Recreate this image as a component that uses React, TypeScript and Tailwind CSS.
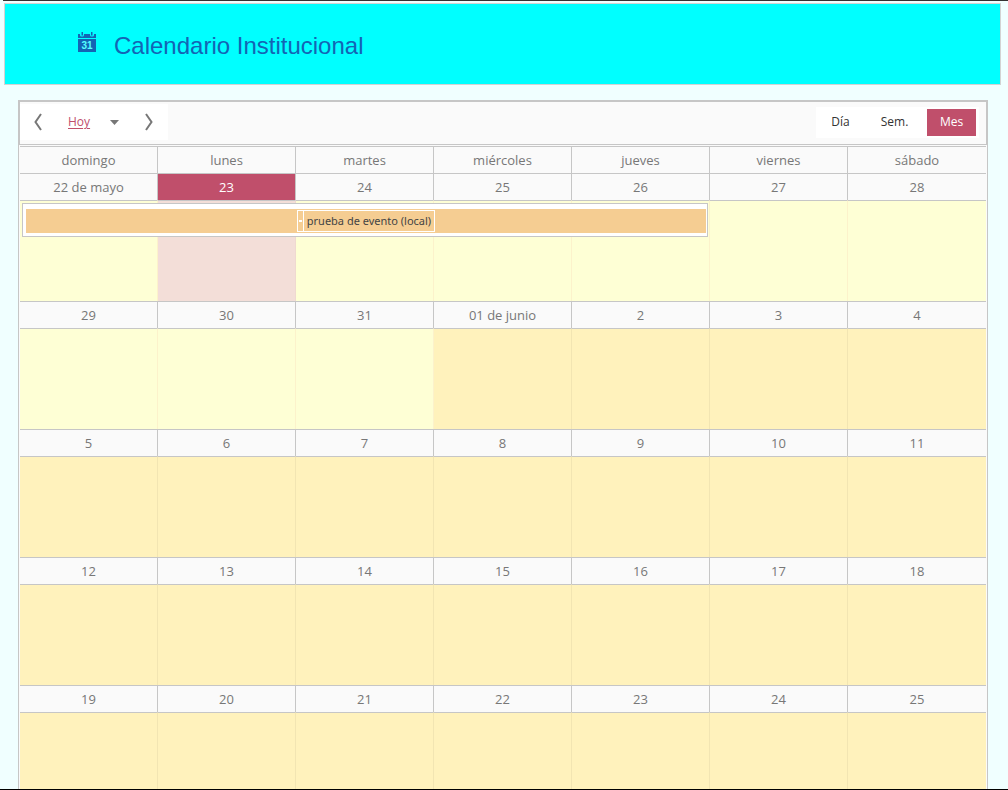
const dayNames = ["domingo", "lunes", "martes", "miércoles", "jueves", "viernes", "sábado"];

type Day = { label: string; tone: "current" | "next" | "today" };

const current = (label: string): Day => ({ label, tone: "current" });
const next = (label: string): Day => ({ label, tone: "next" });

const weeks: Day[][] = [
  [current("22 de mayo"), { label: "23", tone: "today" }, ...["24", "25", "26", "27", "28"].map(current)],
  [...["29", "30", "31"].map(current), ...["01 de junio", "2", "3", "4"].map(next)],
  ["5", "6", "7", "8", "9", "10", "11"].map(next),
  ["12", "13", "14", "15", "16", "17", "18"].map(next),
  ["19", "20", "21", "22", "23", "24", "25"].map(next),
];

const cellTone = {
  current: "bg-[#feffd5] border-r-[#fcf2cb]",
  next: "bg-[#fff2bc] border-r-[#f2e5b2]",
  today: "bg-[#f3ded8] border-r-[#efd9d0]",
};

function CalendarIcon() {
  return (
    <svg viewBox="0 0 18 20" className="h-5 w-[18px]" aria-hidden="true">
      <path
        fill="#1464b4"
        d="M0 2h2v1a1.500 1.500 0 0 0 1.500 1.500h1a1.500 1.500 0 0 0 1.500-1.500V2h6v1a1.500 1.500 0 0 0 1.500 1.500h1a1.500 1.500 0 0 0 1.500-1.500V2h2v4H0zM0 7h18v13H0zM3.500 0h1.500v3.500h-1.500zM13 0h1.500v3.500h-1.500z"
      />
      <text x="9" y="17" textAnchor="middle" fontSize="10" fontWeight="700" fill="#5ff" fontFamily="Liberation Sans, sans-serif">
        31
      </text>
    </svg>
  );
}

function Chevron({ flip = false }: { flip?: boolean }) {
  return (
    <svg viewBox="0 0 10 18" className={flip ? "h-[18px] w-2.5 rotate-180" : "h-[18px] w-2.5"} aria-hidden="true">
      <path d="M8 1 2.500 9 8 17" fill="none" stroke="#777" strokeWidth="2" />
    </svg>
  );
}

function EventBar() {
  return (
    <div className="absolute top-0.5 left-0.5 z-10 h-[34px] w-[calc(500%+1px)] border border-[#c6c6c6] bg-white pt-[5px] pr-px pb-[3px] pl-[3px]">
      <div className="flex h-6 items-center justify-center bg-[#f5cd92]">
        <div className="flex h-[22px] items-center border border-white font-['Noto_Sans',sans-serif] text-[11px] leading-5 text-[#444]">
          <span className="flex h-5 w-1.5 items-center justify-center border-r border-white">
            <span className="h-0.5 w-[3px] bg-white" />
          </span>
          <a href="#evento" className="px-[3px] whitespace-nowrap">
            prueba de evento (local)
          </a>
        </div>
      </div>
    </div>
  );
}

function Toolbar() {
  return (
    <div className="flex h-[45px] shrink-0 items-center justify-between border-2 border-b border-[#c6c6c6] bg-[#fafafa] pr-[7px] pb-0.5 text-xs">
      <div className="flex h-9 w-[148px] items-center bg-white">
        <button type="button" aria-label="Anterior" className="flex w-9 justify-center">
          <Chevron />
        </button>
        <a href="#hoy" className="ml-3 text-[#c04f6b] underline underline-offset-2">
          Hoy
        </a>
        <button type="button" aria-label="Elegir fecha" className="ml-3.5 flex w-5 justify-center">
          <svg viewBox="0 0 9 5" className="h-[5px] w-[9px]" aria-hidden="true">
            <path d="M0 0h9L4.500 5z" fill="#777" />
          </svg>
        </button>
        <button type="button" aria-label="Siguiente" className="ml-auto flex w-[38px] justify-center">
          <Chevron flip />
        </button>
      </div>
      <div className="flex h-[31px] items-center bg-white pr-[3px] text-[#333]">
        <button type="button" className="h-[27px] w-[49px]">
          Día
        </button>
        <button type="button" className="ml-[5px] h-[27px] w-[49px]">
          Sem.
        </button>
        <button type="button" aria-pressed="true" className="ml-2 h-[27px] w-[49px] bg-[#c04f6b] text-white">
          Mes
        </button>
      </div>
    </div>
  );
}

export default function App() {
  return (
    <div className="flex h-screen flex-col overflow-hidden border-b border-black bg-[#f0ffff] font-['Open_Sans','Noto_Sans',sans-serif]">
      <div className="ml-[3px] h-px shrink-0 bg-[#333]" />
      <header className="mt-0.5 mr-[7px] ml-1 flex h-[82px] shrink-0 items-center border border-[#d3d3d3] bg-[#00ffff] pl-[73px]">
        <div className="-mt-1 flex">
          <CalendarIcon />
        </div>
        <h1 className="ml-[18px] pt-1 font-['Liberation_Sans',Arial,sans-serif] text-2xl text-[#1464b4]">
          Calendario Institucional
        </h1>
      </header>
      <main className="mt-[15px] mr-5 ml-[18px] flex min-h-0 flex-1 flex-col overflow-hidden">
        <Toolbar />
        <div className="border-x border-[#c6c6c6] bg-[#fafafa] px-px pt-px">
          <table className="w-full table-fixed border-separate border-spacing-0 text-[13px] leading-5 text-[#777]">
            <thead>
              <tr>
                {dayNames.map((name) => (
                  <th
                    key={name}
                    scope="col"
                    className="h-[27px] border-t border-r border-[#c6c6c6] p-0 font-normal last:border-r-0"
                  >
                    {name}
                  </th>
                ))}
              </tr>
            </thead>
            {weeks.map((week, index) => (
              <tbody key={index}>
                <tr>
                  {week.map((day) => (
                    <td
                      key={day.label}
                      className={`h-[27px] border-t border-r border-[#c6c6c6] p-0 text-center last:border-r-0 ${
                        day.tone === "today" ? "bg-[#c04f6b] text-white" : ""
                      }`}
                    >
                      {day.label}
                    </td>
                  ))}
                </tr>
                <tr>
                  {week.map((day, column) => (
                    <td
                      key={day.label}
                      className={`relative h-[101px] border-t border-r border-t-[#c6c6c6] p-0 last:border-r-0 ${cellTone[day.tone]}`}
                    >
                      {index === 0 && column === 0 && <EventBar />}
                    </td>
                  ))}
                </tr>
              </tbody>
            ))}
          </table>
        </div>
      </main>
    </div>
  );
}
